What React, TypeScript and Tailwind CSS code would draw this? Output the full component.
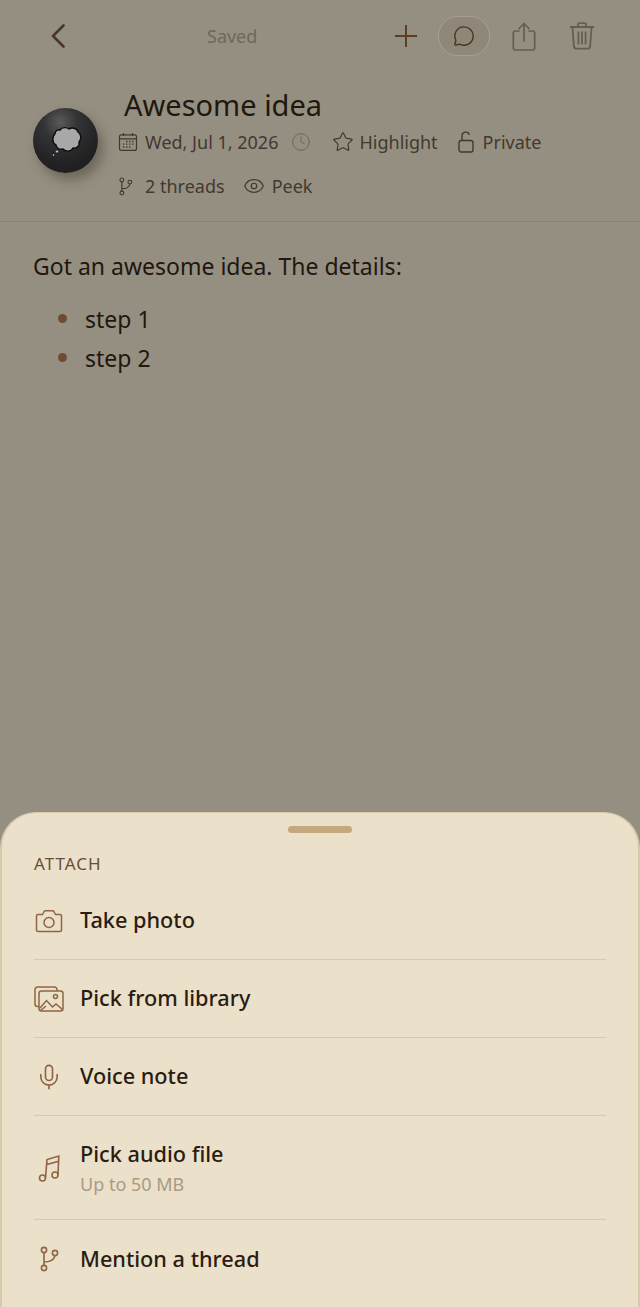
import { Clock, Eye, MessageCircle, Mic, Star } from "lucide-react";

const font = { fontFamily: '"Noto Sans", sans-serif' };

function Branch({ className }: { className?: string }) {
  return (
    <svg viewBox="0 0 20 26" fill="none" stroke="currentColor" strokeWidth="1.6" className={className}>
      <circle cx="5" cy="4" r="2.6" />
      <circle cx="5" cy="22" r="2.6" />
      <circle cx="16" cy="7" r="2.6" />
      <path d="M5 6.6v12.8M5 16c6 0 10-2 11-6.4" />
    </svg>
  );
}

function CalendarIcon({ className }: { className?: string }) {
  return (
    <svg viewBox="0 0 20 20" fill="none" stroke="currentColor" strokeWidth="1.2" className={className}>
      <rect x="1.5" y="2.8" width="17" height="15.6" rx="2" />
      <path d="M1.5 6.8h17M5.5 1v3M14.5 1v3" />
      <path d="M8 9.5h1.400M11 9.5h1.400M14 9.500h1.400M5 12.200h1.400M8 12.200h1.400M11 12.200h1.400M14 12.200h1.400M5 15h1.400M8 15h1.400M11 15h1.400" strokeWidth="1.300" />
    </svg>
  );
}

function ShareIcon({ className }: { className?: string }) {
  return (
    <svg viewBox="0 0 24 29" fill="none" stroke="currentColor" strokeWidth="1.700" strokeLinecap="round" strokeLinejoin="round" className={className}>
      <path d="M7 9H3.500a2.200 2.200 0 0 0-2.200 2.200v14.600a2.200 2.200 0 0 0 2.200 2.200h17a2.200 2.200 0 0 0 2.200-2.200V11.200A2.200 2.200 0 0 0 20.500 9H17" />
      <path d="M12 19V1.500M7 6.500l5-5 5 5" />
    </svg>
  );
}

function TrashIcon({ className }: { className?: string }) {
  return (
    <svg viewBox="0 0 26 28" fill="none" stroke="currentColor" strokeWidth="1.8" className={className}>
      <path d="M1 5h24M9 5V2.6C9 1.8 9.6 1.2 10.4 1.2h5.2c.8 0 1.4.6 1.4 1.4V5" />
      <path d="M3.4 5l1.5 19.4c.1 1.4 1 2.3 2.4 2.3h11.4c1.4 0 2.3-.9 2.4-2.3L22.6 5" />
      <path d="M9.4 9.5v13M13 9.5v13M16.6 9.5v13" />
    </svg>
  );
}

function LibraryIcon({ className }: { className?: string }) {
  return (
    <svg viewBox="0 0 30 26" fill="none" stroke="currentColor" strokeWidth="1.5" className={className}>
      <path d="M5 20.500H3.500A2.500 2.500 0 0 1 1 18V3.500A2.500 2.500 0 0 1 3.500 1h17A2.500 2.500 0 0 1 23 3.500V5" />
      <rect x="5" y="5" width="24" height="20" rx="2.500" />
      <circle cx="21.500" cy="10.500" r="2" />
      <path d="M6 22l6.500-7.500 6 6.500 3.500-3 6.500 5.500M6 25l6-5" />
    </svg>
  );
}

function CameraIcon({ className }: { className?: string }) {
  return (
    <svg viewBox="0 0 28 24" fill="none" stroke="currentColor" strokeWidth="1.500" className={className}>
      <path d="M3 5.500h4.500l1.600-3c.3-.5.7-.8 1.300-.8h7.200c.6 0 1 .3 1.300.8l1.600 3H25c.9 0 1.500.6 1.500 1.500v14c0 .9-.6 1.500-1.500 1.500H3c-.9 0-1.500-.6-1.500-1.500V7c0-.9.6-1.500 1.500-1.500z" />
      <circle cx="14" cy="13.500" r="5" />
    </svg>
  );
}

function MusicIcon({ className }: { className?: string }) {
  return (
    <svg viewBox="0 0 22 28" fill="none" stroke="currentColor" strokeWidth="1.600" className={className}>
      <circle cx="4.500" cy="24" r="3" />
      <circle cx="17" cy="21" r="3" />
      <path d="M7.500 24L9 5.500 20.800 2l-.8 19M8.800 10.500l11.800-3.300" />
    </svg>
  );
}

function LockOpenIcon({ className }: { className?: string }) {
  return (
    <svg viewBox="0 0 16 22" fill="none" stroke="currentColor" strokeWidth="1.400" className={className}>
      <rect x="1" y="9.500" width="14" height="11.500" rx="2.200" />
      <path d="M4 9.500V5a3.800 3.800 0 0 1 7.400-1.300" />
    </svg>
  );
}

function Avatar() {
  return (
    <div className="w-[65px] h-[65px] shrink-0 rounded-full flex items-center justify-center bg-[radial-gradient(circle_at_42%_22%,#5a5a5a_0%,#333335_28%,#232325_62%,#1a1a1c_100%)] shadow-[5px_7px_12px_rgba(60,52,40,0.45)]">
      <svg viewBox="0 0 36 36" className="w-[36px] h-[36px]">
        <path
          d="M12 7C14 4 19 4 21 6C24 4 29 5 30 9C33 11 34 16 31 19C32 23 28 26 25 25C23 29 17 29 15 26C12 27 8 25 8 22C4 20 4 13 7 11C7 8 10 6 12 7Z"
          fill="#a8a8a8"
          stroke="#0c0c0c"
          strokeWidth="1.400"
        />
        <circle cx="9" cy="28.500" r="1.600" fill="#bbb" stroke="#0c0c0c" strokeWidth="0.600" />
        <circle cx="5.500" cy="32" r="1.100" fill="#ccc" stroke="#0c0c0c" strokeWidth="0.500" />
      </svg>
    </div>
  );
}

function Meta({ icon, label, className }: { icon: React.ReactNode; label: string; className?: string }) {
  return (
    <div className={`flex items-center text-[18px] leading-6 text-[#42392e] ${className ?? ""}`}>
      {icon}
      <span>{label}</span>
    </div>
  );
}

function SheetRow({ icon, title, sub, last }: { icon: React.ReactNode; title: string; sub?: string; last?: boolean }) {
  return (
    <div className={`flex items-center ${sub ? "h-[104px]" : "h-[78px]"} ${last ? "" : "border-b border-[#d9c9ab]"}`}>
      <div className="w-[46px] shrink-0 flex items-center justify-center pr-[16px] text-[#8f6543]">{icon}</div>
      <div className={sub || last ? "" : "pb-[1px]"}>
        <div className="text-[21.7px] leading-7 font-medium text-[#2a1c10]">{title}</div>
        {sub && <div className="text-[18px] leading-6 mt-[4px] text-[#a89a84]">{sub}</div>}
      </div>
    </div>
  );
}

export default function App() {
  return (
    <div style={font} className="h-screen w-full overflow-hidden flex flex-col bg-[#958f82]">
      {/* top bar */}
      <div className="h-[72px] flex items-center shrink-0 pl-[51px] pr-[44px]">
        <svg viewBox="0 0 14 24" fill="none" stroke="#4a3526" strokeWidth="2.600" strokeLinecap="round" strokeLinejoin="round" className="w-[14px] h-[24px]">
          <path d="M12.500 1.500L2 12l10.500 10.500" />
        </svg>
        <div className="ml-[142px] text-[18px] text-[#6f675a]">Saved</div>
        <svg viewBox="0 0 24 24" fill="none" stroke="#5f3d22" strokeWidth="2" className="ml-[137px] w-[24px] h-[24px]">
          <path d="M12 1v22M1 12h22" />
        </svg>
        <div className="ml-[20px] w-[52px] h-[40px] rounded-full flex items-center justify-center bg-[#8f8878] border border-[#a5a092]">
          <MessageCircle className="w-[22px] h-[22px] text-[#413628]" strokeWidth={1.500} />
        </div>
        <ShareIcon className="ml-[22px] w-[24px] h-[29px] text-[#655d50]" />
        <TrashIcon className="ml-[33px] w-[26px] h-[28px] text-[#655d50]" />
      </div>

      {/* note header */}
      <div className="h-[150px] shrink-0 border-b border-[#858073] flex items-start pl-[33px]">
        <div className="pt-[36px]">
          <Avatar />
        </div>
        <div className="ml-[20px]">
          <div className="ml-[6px] mt-[15px] text-[29px] leading-9 text-[#21170e]">Awesome idea</div>
          <div className="flex items-center mt-[7px] h-[24px]">
            <Meta icon={<CalendarIcon className="w-[20px] h-[20px] mr-[7px]" />} label="Wed, Jul 1, 2026" />
            <Clock className="ml-[13px] w-[20px] h-[20px] text-[#6e665a]" strokeWidth={1.200} />
            <Meta className="ml-[21px]" icon={<Star className="w-[22px] h-[22px] mr-[5px]" strokeWidth={1.300} />} label="Highlight" />
            <Meta className="ml-[20px]" icon={<LockOpenIcon className="w-[16px] h-[22px] mr-[9px]" />} label="Private" />
          </div>
          <div className="flex items-center mt-[20px] h-[24px]">
            <Meta icon={<Branch className="w-[15px] h-[19px] mr-[12px]" />} label="2 threads" />
            <Meta className="ml-[18px]" icon={<Eye className="w-[22px] h-[22px] mr-[7px]" strokeWidth={1.300} />} label="Peek" />
          </div>
        </div>
      </div>

      {/* body */}
      <div className="flex-1 pl-[33px] pt-[29px] text-[23px] leading-[30px] text-[#21170e]">
        <p>Got an awesome idea. The details:</p>
        <ul className="mt-[18px]">
          <li className="flex items-center h-[39px]">
            <span className="w-[9px] h-[9px] ml-[25px] mr-[18px] rounded-full bg-[#6e4b33]" />
            step 1
          </li>
          <li className="flex items-center h-[39px]">
            <span className="w-[9px] h-[9px] ml-[25px] mr-[18px] rounded-full bg-[#6e4b33]" />
            step 2
          </li>
        </ul>
      </div>

      {/* attach sheet */}
      <div className="h-[495px] shrink-0 rounded-t-[36px] bg-[#ebe0ca] border-t border-x-2 border-[#d9c9ab] px-[32px]">
        <div className="mx-auto mt-[13px] w-[64px] h-[7px] rounded-full bg-[#c4a97f]" />
        <div className="mt-[21px] text-[17px] leading-5 tracking-[1px] text-[#6a4d36]">ATTACH</div>
        <div className="mt-[8px]">
          <SheetRow icon={<CameraIcon className="w-[28px] h-[24px]" />} title="Take photo" />
          <SheetRow icon={<LibraryIcon className="w-[30px] h-[26px]" />} title="Pick from library" />
          <SheetRow icon={<Mic className="w-[28px] h-[28px]" strokeWidth={1.400} />} title="Voice note" />
          <SheetRow icon={<MusicIcon className="w-[22px] h-[28px]" />} title="Pick audio file" sub="Up to 50 MB" />
          <SheetRow icon={<Branch className="w-[20px] h-[26px]" />} title="Mention a thread" last />
        </div>
      </div>
    </div>
  );
}
